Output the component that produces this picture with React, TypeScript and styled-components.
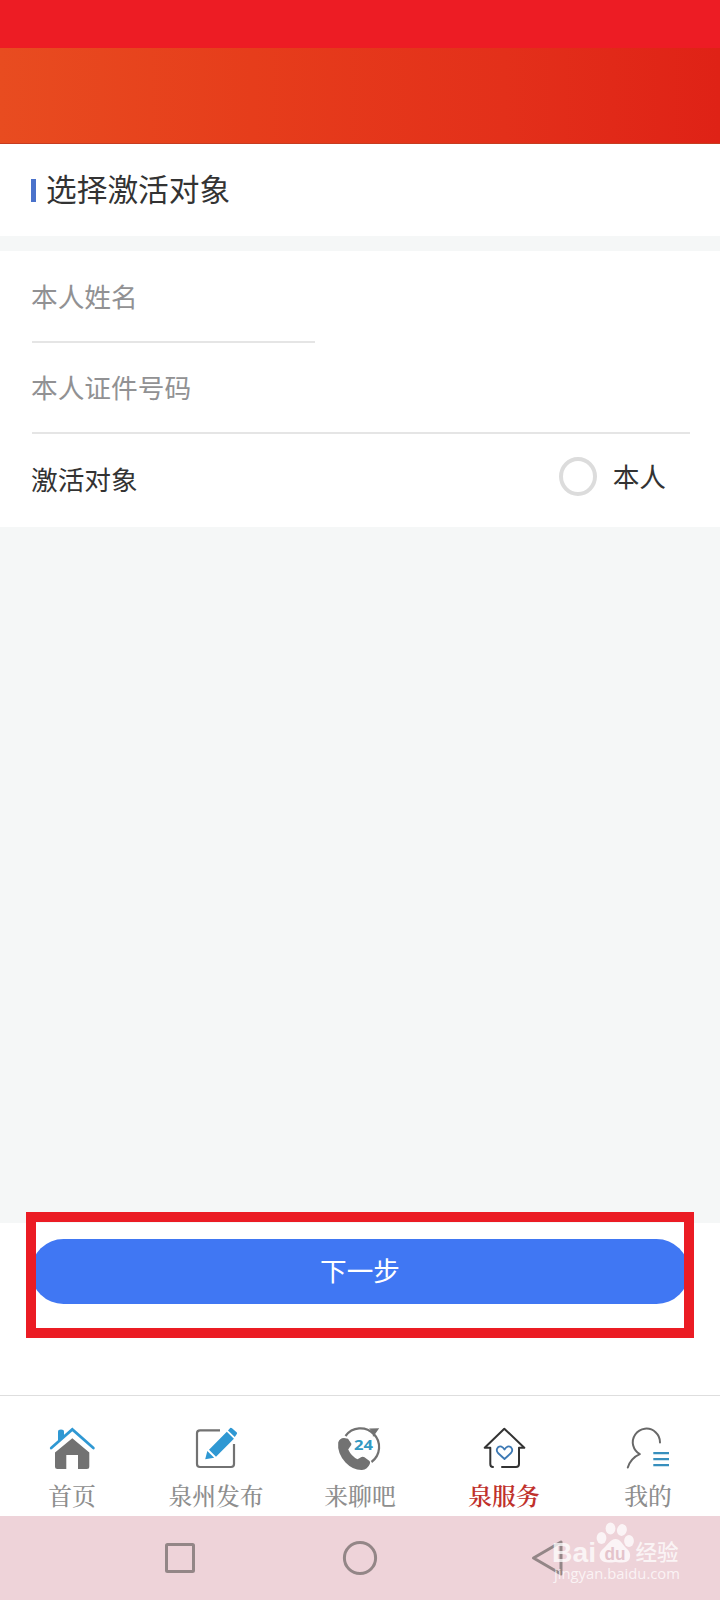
import React from "react";
import styled, { createGlobalStyle } from "styled-components";

const GlobalStyle = createGlobalStyle`
  * { box-sizing: border-box; }
  body { margin: 0; background: #fff; }
`;

const Screen = styled.div`
  position: relative;
  display: flex;
  flex-direction: column;
  width: 720px;
  height: 1600px;
  overflow: hidden;
  background: #f5f7f7;
  font-family: "Noto Sans CJK SC", "Noto Sans", sans-serif;
  color: #333;
`;

const StatusBar = styled.div`
  height: 48px;
  background: #ed1c24;
`;

const HeaderBar = styled.header`
  height: 96px;
  background: linear-gradient(90deg, #e84c20 0%, #e63d1b 35%, #e3301a 70%, #df2216 100%);
  border-bottom: 1px solid #c63c20;
`;

const TitleSection = styled.section`
  display: flex;
  align-items: center;
  height: 92px;
  padding: 0 31px;
  margin-bottom: 15px;
  background: #fff;
`;

const TitleMark = styled.span`
  width: 5px;
  height: 23px;
  margin-right: 10px;
  background: #4a72cb;
`;

const Title = styled.h1`
  margin: 0;
  padding-bottom: 4px;
  font-size: 30.7px;
  font-weight: 400;
  line-height: 44px;
`;

const Form = styled.form`
  height: 276px;
  padding: 0 30px 0 32px;
  background: #fff;
`;

const Field = styled.label<{ $width: number; $height: number }>`
  display: flex;
  align-items: center;
  width: ${(p) => p.$width}px;
  height: ${(p) => p.$height}px;
  border-bottom: 2px solid #e5e5e5;
  color: #919193;
  font-size: 26.7px;
  line-height: 40px;
`;

const FieldText = styled.span`
  margin-left: -1px;
  padding-bottom: 1px;
`;

const TargetRow = styled.div`
  display: flex;
  align-items: center;
  justify-content: space-between;
  height: 90px;
  padding-right: 24px;
  font-size: 26.7px;
  line-height: 40px;
`;

const Option = styled.span`
  display: flex;
  align-items: center;
  gap: 16px;
  margin-top: -5px;
`;

const OptionText = styled.span`
  padding-bottom: 2px;
`;

const Radio = styled.span`
  width: 38px;
  height: 39px;
  border: 4px solid #dcdcdc;
  border-radius: 50%;
`;

const Spacer = styled.div`
  flex: 1;
`;

const ActionArea = styled.section`
  height: 172px;
  padding: 16px 31px 0;
  background: #fff;
`;

const NextButton = styled.button`
  display: block;
  width: 658px;
  height: 65px;
  padding: 0 0 4px;
  border: 0;
  border-radius: 33px;
  background: #4077f3;
  color: #fff;
  font-family: inherit;
  font-size: 26.6px;
  line-height: 40px;
`;

const Highlight = styled.div`
  position: absolute;
  left: 26px;
  top: 1212px;
  width: 668px;
  height: 126px;
  border: 10px solid #eb1c24;
`;

const TabBar = styled.nav`
  display: grid;
  grid-template-columns: repeat(5, 144px);
  height: 121px;
  padding-top: 26px;
  border-top: 1px solid #dedede;
  background: #fff;
`;

const Tab = styled.div<{ $active?: boolean }>`
  display: flex;
  flex-direction: column;
  align-items: center;
  color: ${(p) => (p.$active ? "#c0302b" : "#8e8e8e")};
  font-family: "Noto Serif CJK SC", "Noto Sans CJK SC", serif;
  font-weight: ${(p) => (p.$active ? 600 : 500)};
  font-size: 23.8px;
  line-height: 36px;
`;

const TabIcon = styled.svg`
  width: 48px;
  height: 48px;
  margin-bottom: 7px;
  overflow: visible;
  fill: none;
`;

const SystemNav = styled.footer`
  display: grid;
  grid-template-columns: repeat(3, 180px);
  justify-content: center;
  justify-items: center;
  align-items: center;
  height: 84px;
  background: #eed3d9;
`;

const NavIcon = styled.svg`
  width: 50px;
  height: 40px;
  fill: none;
  stroke: #938687;
  stroke-width: 3;
  stroke-linejoin: round;
`;

const Watermark = styled.svg`
  position: absolute;
  left: 550px;
  top: 1520px;
  width: 134px;
  height: 64px;
  overflow: visible;
`;

const blue = "#2f98d3";
const gray = "#727272";

const HomeIcon = () => (
  <TabIcon viewBox="0 0 48 48">
    <path d="M10 20V9.5Q10 7.5 13 7.5Q16 7.5 16 9.5V15Z" fill={blue} />
    <path d="M3.2 26L24.3 7.4L45.4 26" stroke={blue} strokeWidth="2.7" strokeLinecap="round" />
    <path d="M24.3 16.2L41.3 30.5V44.5Q41.3 47 38.8 47H30V33H18.3V47H9.5Q7 47 7 44.5V30.5Z" fill={gray} />
  </TabIcon>
);

const EditIcon = () => (
  <TabIcon viewBox="0 0 48 48">
    <path d="M28 8.3H8Q5 8.3 5 11.3V42Q5 45 8 45H39Q42 45 42 42V22" stroke={gray} strokeWidth="2.2" />
    <path d="M17 27.8L34.8 9.8L41.9 16.7L24 34.7ZM15.3 29L22.2 35.7L13.2 37.2ZM36 8.4L38.2 6Q39 5.4 40 6.2L44.6 10.2Q45.5 11 44.8 12L42.8 15Z" fill={blue} />
  </TabIcon>
);

const PhoneIcon = () => (
  <TabIcon viewBox="0 0 48 48">
    <path d="M9.5 14A18.6 18.6 0 1 1 35.5 40" stroke={gray} strokeWidth="2.2" />
    <path d="M33 6.6L43.2 6.2L37 15Q37.2 9.6 33 6.6Z" fill={gray} />
    <path d="M2.2 20.5Q3.5 16 8 16L12 16.8L15.4 21.8Q15.5 23 14.5 24L12.2 27.5Q15.5 34.5 21.5 37.2L25.5 35Q27 34.2 28.5 35.3L33.5 39Q34.5 40 33.8 42Q31.5 47.5 26 48Q17 48.3 9.5 40.5Q1 31 2.2 20.5Z" fill={gray} />
    <text x="18" y="28" fill="#3299c2" fontFamily="Open Sans, sans-serif" fontSize="15" fontWeight="700" textLength="19" lengthAdjust="spacingAndGlyphs">24</text>
  </TabIcon>
);

const ServiceIcon = () => (
  <TabIcon viewBox="0 0 48 48" strokeLinejoin="round" strokeLinecap="round">
    <path d="M13 45Q10.3 45 10.3 42V25.7H4.7L24.3 6.7L44.3 25.7H39V42Q39 45 36 45H22" stroke="#333" strokeWidth="2" />
    <path d="M24.5 37L18 31Q15.5 28 18 25.3Q21.5 22.7 24.5 27.5Q27.5 22.7 31 25.3Q33.5 28 31 31Z" stroke="#3d79b4" strokeWidth="1.8" />
  </TabIcon>
);

const ProfileIcon = () => (
  <TabIcon viewBox="0 0 48 48" strokeLinecap="round">
    <path d="M36 20.5A13.6 13.6 0 1 0 9.2 23.5Q10.6 29 15.8 32.2Q7 36 3.8 45.5" stroke="#686868" strokeWidth="2" strokeLinejoin="round" />
    <path d="M29.3 31.1H45M29.3 37.2H45M29.3 43.2H45" stroke="#378fbd" strokeWidth="2.2" strokeLinecap="butt" />
  </TabIcon>
);

const tabs = [
  { label: "首页", Icon: HomeIcon },
  { label: "泉州发布", Icon: EditIcon },
  { label: "来聊吧", Icon: PhoneIcon },
  { label: "泉服务", Icon: ServiceIcon, active: true },
  { label: "我的", Icon: ProfileIcon },
];

export default function App() {
  return (
    <>
      <GlobalStyle />
      <Screen>
        <StatusBar />
        <HeaderBar />
        <TitleSection>
          <TitleMark />
          <Title>选择激活对象</Title>
        </TitleSection>
        <Form>
          <Field $width={283} $height={92}><FieldText>本人姓名</FieldText></Field>
          <Field $width={658} $height={91}><FieldText>本人证件号码</FieldText></Field>
          <TargetRow>
            <FieldText>激活对象</FieldText>
            <Option><Radio /><OptionText>本人</OptionText></Option>
          </TargetRow>
        </Form>
        <Spacer />
        <ActionArea>
          <NextButton>下一步</NextButton>
        </ActionArea>
        <TabBar>
          {tabs.map(({ label, Icon, active }) => (
            <Tab key={label} $active={active}>
              <Icon />
              {label}
            </Tab>
          ))}
        </TabBar>
        <SystemNav>
          <NavIcon viewBox="0 0 50 40"><rect x="11.5" y="6.5" width="27" height="27" rx="1" /></NavIcon>
          <NavIcon viewBox="0 0 50 40"><circle cx="25" cy="20" r="15.6" /></NavIcon>
          <NavIcon viewBox="0 0 50 40"><path d="M18.5 20L46 4V36Z" /></NavIcon>
        </SystemNav>
        <Highlight />
        <Watermark viewBox="0 0 134 64" fill="#fff" fillOpacity="0.75">
          <text x="2" y="41.5" fontFamily="Liberation Sans, sans-serif" fontSize="28" fontWeight="700" textLength="44" lengthAdjust="spacingAndGlyphs">Bai</text>
          <ellipse cx="51.5" cy="18" rx="4.9" ry="6" />
          <ellipse cx="60.5" cy="8.5" rx="4.9" ry="6" />
          <ellipse cx="71.9" cy="10" rx="4.9" ry="6" transform="rotate(12 71.9 10)" />
          <ellipse cx="79" cy="21" rx="4.9" ry="6" />
          <path d="M65.5 19C70 19 72.5 24 76 28C80 31 81 35 79.5 39C77.5 43 73 43 65.5 42C58 43 53 43 50.5 39C48.5 35 50 31 54 28C58 24.5 60.5 19 65.5 19Z" />
          <text x="54.5" y="39.5" fill="#e4c3cb" fillOpacity="1" fontFamily="Liberation Sans, sans-serif" fontSize="19" fontWeight="700" textLength="21" lengthAdjust="spacingAndGlyphs">du</text>
          <text x="85.5" y="40" fontFamily="Noto Sans CJK SC, sans-serif" fontSize="21.5" fontWeight="500">经验</text>
          <text x="4" y="59" fontFamily="Open Sans, sans-serif" fontSize="15" textLength="126" lengthAdjust="spacingAndGlyphs">jingyan.baidu.com</text>
        </Watermark>
      </Screen>
    </>
  );
}
